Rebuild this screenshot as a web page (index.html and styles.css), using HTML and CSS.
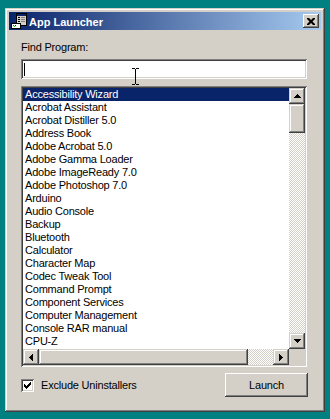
FILE: index.html
```html
<!DOCTYPE html>
<html lang="en">
<head>
    <meta charset="UTF-8">
    <title>App Launcher</title>
    <link rel="stylesheet" href="styles.css">
</head>
<body>

<div class="window">
    <div class="titlebar">
        <svg class="app-icon" width="16" height="16" viewBox="0 0 16 16">
            <rect x="5.5" y="0.5" width="10" height="12" fill="#d4d0c8" stroke="#000"/>
            <rect x="6" y="1" width="9" height="2" fill="#0a246a"/>
            <rect x="7" y="4" width="2" height="1" fill="#000"/>
            <rect x="7" y="6" width="2" height="1" fill="#000"/>
            <rect x="7" y="8" width="2" height="1" fill="#000"/>
            <rect x="10" y="4" width="4" height="1" fill="#808080"/>
            <rect x="10" y="6" width="4" height="1" fill="#808080"/>
            <rect x="10" y="8" width="4" height="1" fill="#808080"/>
            <rect x="0.5" y="10.5" width="9" height="5" fill="#fff" stroke="#000"/>
            <rect x="2" y="12" width="1" height="1" fill="#f00"/>
            <rect x="3" y="13" width="1" height="1" fill="#0c0"/>
            <rect x="4" y="12" width="1" height="1" fill="#00f"/>
        </svg>
        <span class="title-text">App Launcher</span>
        <div class="close-btn">
            <svg width="8" height="7" viewBox="0 0 8 7">
                <path d="M0 0h2l2 2 2-2h2v1l-2.5 2.5L8 6v1H6L4 5 2 7H0V6l2.5-2.5L0 1z" fill="#000"/>
            </svg>
        </div>
    </div>

    <div class="content">
        <label class="field-label">Find Program:</label>
        <div class="search-box"><span class="caret"></span></div>

        <div class="listbox">
            <div class="list-items">
                <div class="item selected">Accessibility Wizard</div>
                <div class="item">Acrobat Assistant</div>
                <div class="item">Acrobat Distiller 5.0</div>
                <div class="item">Address Book</div>
                <div class="item">Adobe Acrobat 5.0</div>
                <div class="item">Adobe Gamma Loader</div>
                <div class="item">Adobe ImageReady 7.0</div>
                <div class="item">Adobe Photoshop 7.0</div>
                <div class="item">Arduino</div>
                <div class="item">Audio Console</div>
                <div class="item">Backup</div>
                <div class="item">Bluetooth</div>
                <div class="item">Calculator</div>
                <div class="item">Character Map</div>
                <div class="item">Codec Tweak Tool</div>
                <div class="item">Command Prompt</div>
                <div class="item">Component Services</div>
                <div class="item">Computer Management</div>
                <div class="item">Console RAR manual</div>
                <div class="item">CPU-Z</div>
            </div>

            <div class="vscroll">
                <div class="sb-btn">
                    <svg width="7" height="4" viewBox="0 0 7 4"><path d="M3 0h1v1h1v1h1v1h1v1H0V3h1V2h1V1h1z" fill="#000"/></svg>
                </div>
                <div class="sb-thumb v-thumb"></div>
                <div class="sb-track"></div>
                <div class="sb-btn">
                    <svg width="7" height="4" viewBox="0 0 7 4"><path d="M0 0h7v1H6v1H5v1H4v1H3V3H2V2H1V1H0z" fill="#000"/></svg>
                </div>
            </div>

            <div class="hscroll">
                <div class="sb-btn">
                    <svg width="4" height="7" viewBox="0 0 4 7"><path d="M3 0h1v7H3V6H2V5H1V4H0V3h1V2h1V1h1z" fill="#000"/></svg>
                </div>
                <div class="sb-thumb h-thumb"></div>
                <div class="sb-track"></div>
                <div class="sb-btn">
                    <svg width="4" height="7" viewBox="0 0 4 7"><path d="M0 0h1v1h1v1h1v1h1v1H3v1H2v1H1v1H0z" fill="#000"/></svg>
                </div>
            </div>

            <div class="sb-corner"></div>
        </div>

        <div class="bottom-row">
            <div class="check-group">
                <div class="checkbox">
                    <svg width="7" height="7" viewBox="0 0 7 7">
                        <path d="M6 0h1v3H6v1H5v1H4v1H3v1H2V6H1V5H0V2h1v1h1v1h1V3h1V2h1V1h1z" fill="#000"/>
                    </svg>
                </div>
                <span class="check-label">Exclude Uninstallers</span>
            </div>
            <div class="launch-btn">Launch</div>
        </div>
    </div>

    <!-- mouse pointer hovering over the search box -->
    <svg class="ibeam" width="9" height="17" viewBox="0 0 9 17">
        <path d="M1 0.5h3M5 0.5h3M4.5 1v15M1 16.5h3M5 16.5h3" stroke="#000" fill="none"/>
    </svg>
</div>

</body>
</html>
```

FILE: styles.css
```css
body {
    margin: 0;
    padding: 8px 0 0 5px;
    background-color: #008080;
    font-family: "Liberation Sans", Arial, sans-serif;
    font-size: 11px;
    letter-spacing: -0.2px;
    color: #000;
}
.window {
    position: relative;
    width: 320px;
    height: 404px;
    box-sizing: border-box;
    padding: 4px;
    background-color: #d4d0c8;
    box-shadow: inset -1px -1px #404040, inset 1px 1px #d4d0c8, inset -2px -2px #808080, inset 2px 2px #fff;
    display: flex;
    flex-direction: column;
}
.titlebar {
    height: 18px;
    display: flex;
    align-items: center;
    padding: 0 2px;
    background: linear-gradient(to right, #0a246a, #a6caf0);
}
.app-icon {
    flex: none;
    margin-right: 2px;
}
.title-text {
    flex: 1;
    color: #fff;
    font-weight: bold;
    font-size: 11px;
    letter-spacing: 0;
    padding-top: 1px;
}
.close-btn {
    width: 16px;
    height: 14px;
    box-sizing: border-box;
    display: flex;
    align-items: center;
    justify-content: center;
    background-color: #d4d0c8;
    box-shadow: inset -1px -1px #404040, inset 1px 1px #fff, inset -2px -2px #808080;
}
.content {
    flex: 1;
    display: flex;
    flex-direction: column;
    padding: 11px 12px 0 12px;
}
.field-label {
    line-height: 13px;
    height: 13px;
}
.search-box {
    margin-top: 5px;
    height: 20px;
    width: 286px;
    box-sizing: border-box;
    background-color: #fff;
    box-shadow: inset 1px 1px #808080, inset -1px -1px #fff, inset 2px 2px #404040, inset -2px -2px #d4d0c8;
    display: flex;
    align-items: center;
    padding-left: 3px;
}
.caret {
    width: 1px;
    height: 13px;
    background-color: #000;
}
.listbox {
    margin-top: 7px;
    width: 286px;
    height: 281px;
    box-sizing: border-box;
    padding: 2px;
    background-color: #fff;
    box-shadow: inset 1px 1px #808080, inset -1px -1px #fff, inset 2px 2px #404040, inset -2px -2px #d4d0c8;
    display: grid;
    grid-template-columns: 266px 16px;
    grid-template-rows: 261px 16px;
}
.list-items {
    overflow: hidden;
}
.item {
    height: 13px;
    line-height: 13px;
    padding-left: 2px;
    white-space: nowrap;
}
.item.selected {
    background-color: #0a246a;
    color: #fff;
}
.vscroll {
    display: flex;
    flex-direction: column;
}
.hscroll {
    display: flex;
}
.sb-btn {
    flex: none;
    width: 16px;
    height: 16px;
    box-sizing: border-box;
    display: flex;
    align-items: center;
    justify-content: center;
    background-color: #d4d0c8;
    box-shadow: inset -1px -1px #404040, inset 1px 1px #d4d0c8, inset -2px -2px #808080, inset 2px 2px #fff;
}
.sb-thumb {
    flex: none;
    background-color: #d4d0c8;
    box-shadow: inset -1px -1px #404040, inset 1px 1px #d4d0c8, inset -2px -2px #808080, inset 2px 2px #fff;
}
.v-thumb {
    height: 29px;
}
.h-thumb {
    width: 209px;
}
.sb-track {
    flex: 1;
    background: repeating-conic-gradient(#d4d0c8 0 25%, #fff 0 50%) 0 0 / 2px 2px;
}
.sb-corner {
    background-color: #d4d0c8;
}
.bottom-row {
    margin-top: 6px;
    width: 287px;
    height: 24px;
    display: flex;
    align-items: center;
    justify-content: space-between;
}
.check-group {
    display: flex;
    align-items: center;
}
.checkbox {
    width: 13px;
    height: 13px;
    box-sizing: border-box;
    background-color: #fff;
    box-shadow: inset 1px 1px #808080, inset -1px -1px #fff, inset 2px 2px #404040, inset -2px -2px #d4d0c8;
    display: flex;
    align-items: center;
    justify-content: center;
    margin-right: 7px;
}
.launch-btn {
    width: 83px;
    height: 24px;
    box-sizing: border-box;
    line-height: 24px;
    text-align: center;
    background-color: #d4d0c8;
    box-shadow: inset -1px -1px #404040, inset 1px 1px #fff, inset -2px -2px #808080;
}
.ibeam {
    position: absolute;
    left: 126px;
    top: 60px;
}
```
